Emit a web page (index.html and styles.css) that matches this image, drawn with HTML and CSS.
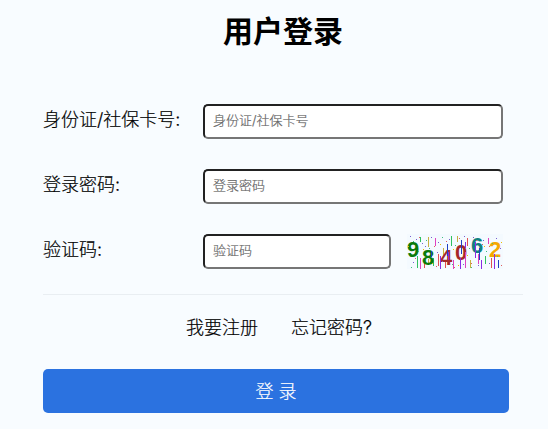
FILE: index.html
```html
<!DOCTYPE html>
<html lang="zh-CN">
<head>
  <meta charset="UTF-8" />
  <meta name="viewport" content="width=device-width, initial-scale=1.0" />
  <title>用户登录</title>
  <link rel="stylesheet" href="styles.css">
</head>
<body>
  <div class="login">
    <h1>用户登录</h1>

    <div class="row">
      <label for="idcard">身份证/社保卡号:</label>
      <input id="idcard" type="text" placeholder="身份证/社保卡号">
    </div>
    <div class="row">
      <label for="pwd">登录密码:</label>
      <input id="pwd" type="text" placeholder="登录密码">
    </div>
    <div class="row">
      <label for="code">验证码:</label>
      <input id="code" class="short" type="text" placeholder="验证码">
      <svg class="captcha" viewBox="0 0 96 35" width="96" height="35">
        <rect width="96" height="35" fill="#f4faff"/>
        <g stroke-width="1" fill="none">
          <path stroke="#c8b040" d="M21.5 3v10M36.500 14v8M50.500 2v6M63.500 26v8M21.500 25v6"/>
          <path stroke="#30c060" d="M10.500 22v12M26.500 24v8M44.500 2v10M78.500 22v8M13.500 3v5"/>
          <path stroke="#e05050" d="M17.500 28v6M38.500 26v8M60.500 4v8M84.500 24v10M31.500 20v12"/>
        </g>
        <g class="digits">
          <text x="0" y="23" fill="#0a7a0a">9</text>
          <text x="15" y="31" fill="#0a7a0a">8</text>
          <text x="33" y="31" fill="#a52a2a">4</text>
          <text x="48" y="26" fill="#a52a2a">0</text>
          <text x="64" y="19" fill="#108080">6</text>
          <text x="82" y="23" fill="#f5a800">2</text>
        </g>
        <g stroke-width="1" fill="none">
          <path stroke="#8a2be2" d="M33.500 22v13M53.500 24v11M68.500 8v16M74.500 26v9M87.500 20v15M41.500 18v8M58.500 8v6"/>
          <path stroke="#e040c0" d="M13.500 24v11M28.500 4v8M46.500 26v9M58.500 18v16M81.500 4v6M71.500 20v10"/>
          <path stroke="#2040c0" d="M40.500 10v12M54.500 6v14M72.500 14v12M91.500 26v8M24.500 17v6"/>
          <path stroke="#7a5fd0" d="M3 2.500h1M9 5.500h1M15 9.500h1M24 3.500h1M31 8.500h1M42 5.500h1M57 2.500h1M66 3.500h1M76 6.500h1M89 4.500h1M6 28.500h1M30 18.500h1M71 31.500h1M93 14.500h1M18 12.500h1M35 27.500h1M56 30.500h1M82 29.500h1"/>
          <path stroke="#40c080" d="M6 7.500h1M19 6.500h1M35 3.500h1M48 11.500h1M62 14.500h1M85 9.500h1M4 33.500h1M22 14.500h1M79 17.500h1M11 17.500h1M45 30.500h1M90 22.500h1M64 33.500h1"/>
          <path stroke="#e06060" d="M12 3.500h1M27 12.500h1M39 7.500h1M52 4.500h1M69 6.500h1M82 12.500h1M8 24.500h1M47 33.500h1M64 29.500h1M94 31.500h1M29 32.500h1M75 10.500h1"/>
          <path stroke="#f0c000" d="M1 12.500h1M16 15.500h1M33 10.500h1M46 15.500h1M60 21.500h1M77 12.500h1M94 8.500h1M25 29.500h1M51 31.500h1"/>
        </g>
      </svg>
    </div>

    <hr>

    <div class="links">
      <a href="#">我要注册</a>
      <a href="#">忘记密码?</a>
    </div>

    <button type="button" class="submit">登 录</button>
  </div>
</body>
</html>
```

FILE: styles.css
```css
body {
  margin: 0;
  background-color: #f8fcff;
  color: #000;
  font-family: Inter, "Noto Sans CJK SC", sans-serif;
  font-weight: 300;
  -webkit-text-stroke: 0.2px;
}

.login {
  width: 480px;
  margin-left: 43px;
}

h1 {
  height: 42px;
  margin: 0 0 53px;
  padding-top: 8px;
  padding-bottom: 1px;
  font-family: "Noto Sans CJK SC", sans-serif;
  font-size: 30px;
  font-weight: bold;
  line-height: 42px;
  text-align: center;
  -webkit-text-stroke: 0;
}

.row {
  display: flex;
  align-items: center;
  height: 35px;
  margin-bottom: 30px;
}

.row label {
  width: 160px;
  padding-bottom: 4px;
  font-size: 18px;
  line-height: 30px;
}

.row input {
  box-sizing: border-box;
  width: 300px;
  height: 35px;
  padding: 0 8px 3px;
  border: 2px solid #222;
  border-right-color: #767676;
  border-bottom-color: #767676;
  border-radius: 5px;
  background: #fff;
  font-family: inherit;
  font-size: 13px;
  font-weight: 300;
  outline: none;
}

.row input::placeholder {
  color: #666;
}

.row input.short {
  width: 188px;
}

.captcha {
  display: block;
  margin-left: 16px;
}

.digits text {
  font-family: "Liberation Sans", sans-serif;
  font-size: 22px;
  font-weight: bold;
  -webkit-text-stroke: 0;
}

hr {
  height: 1px;
  margin: -5px 0 0;
  border: none;
  background-color: #e9eef2;
}

.links {
  display: flex;
  justify-content: center;
  gap: 33px;
  height: 74px;
  padding: 15px 8px 0 0;
  box-sizing: border-box;
  font-size: 18px;
  line-height: 36px;
}

.links a {
  color: #000;
  text-decoration: none;
}

.submit {
  display: block;
  width: 466px;
  height: 44px;
  padding: 0 0 3px;
  border: none;
  border-radius: 5px;
  background-color: #2b72e0;
  color: #fff;
  font-family: inherit;
  font-size: 18px;
  font-weight: 300;
  cursor: pointer;
}
```
